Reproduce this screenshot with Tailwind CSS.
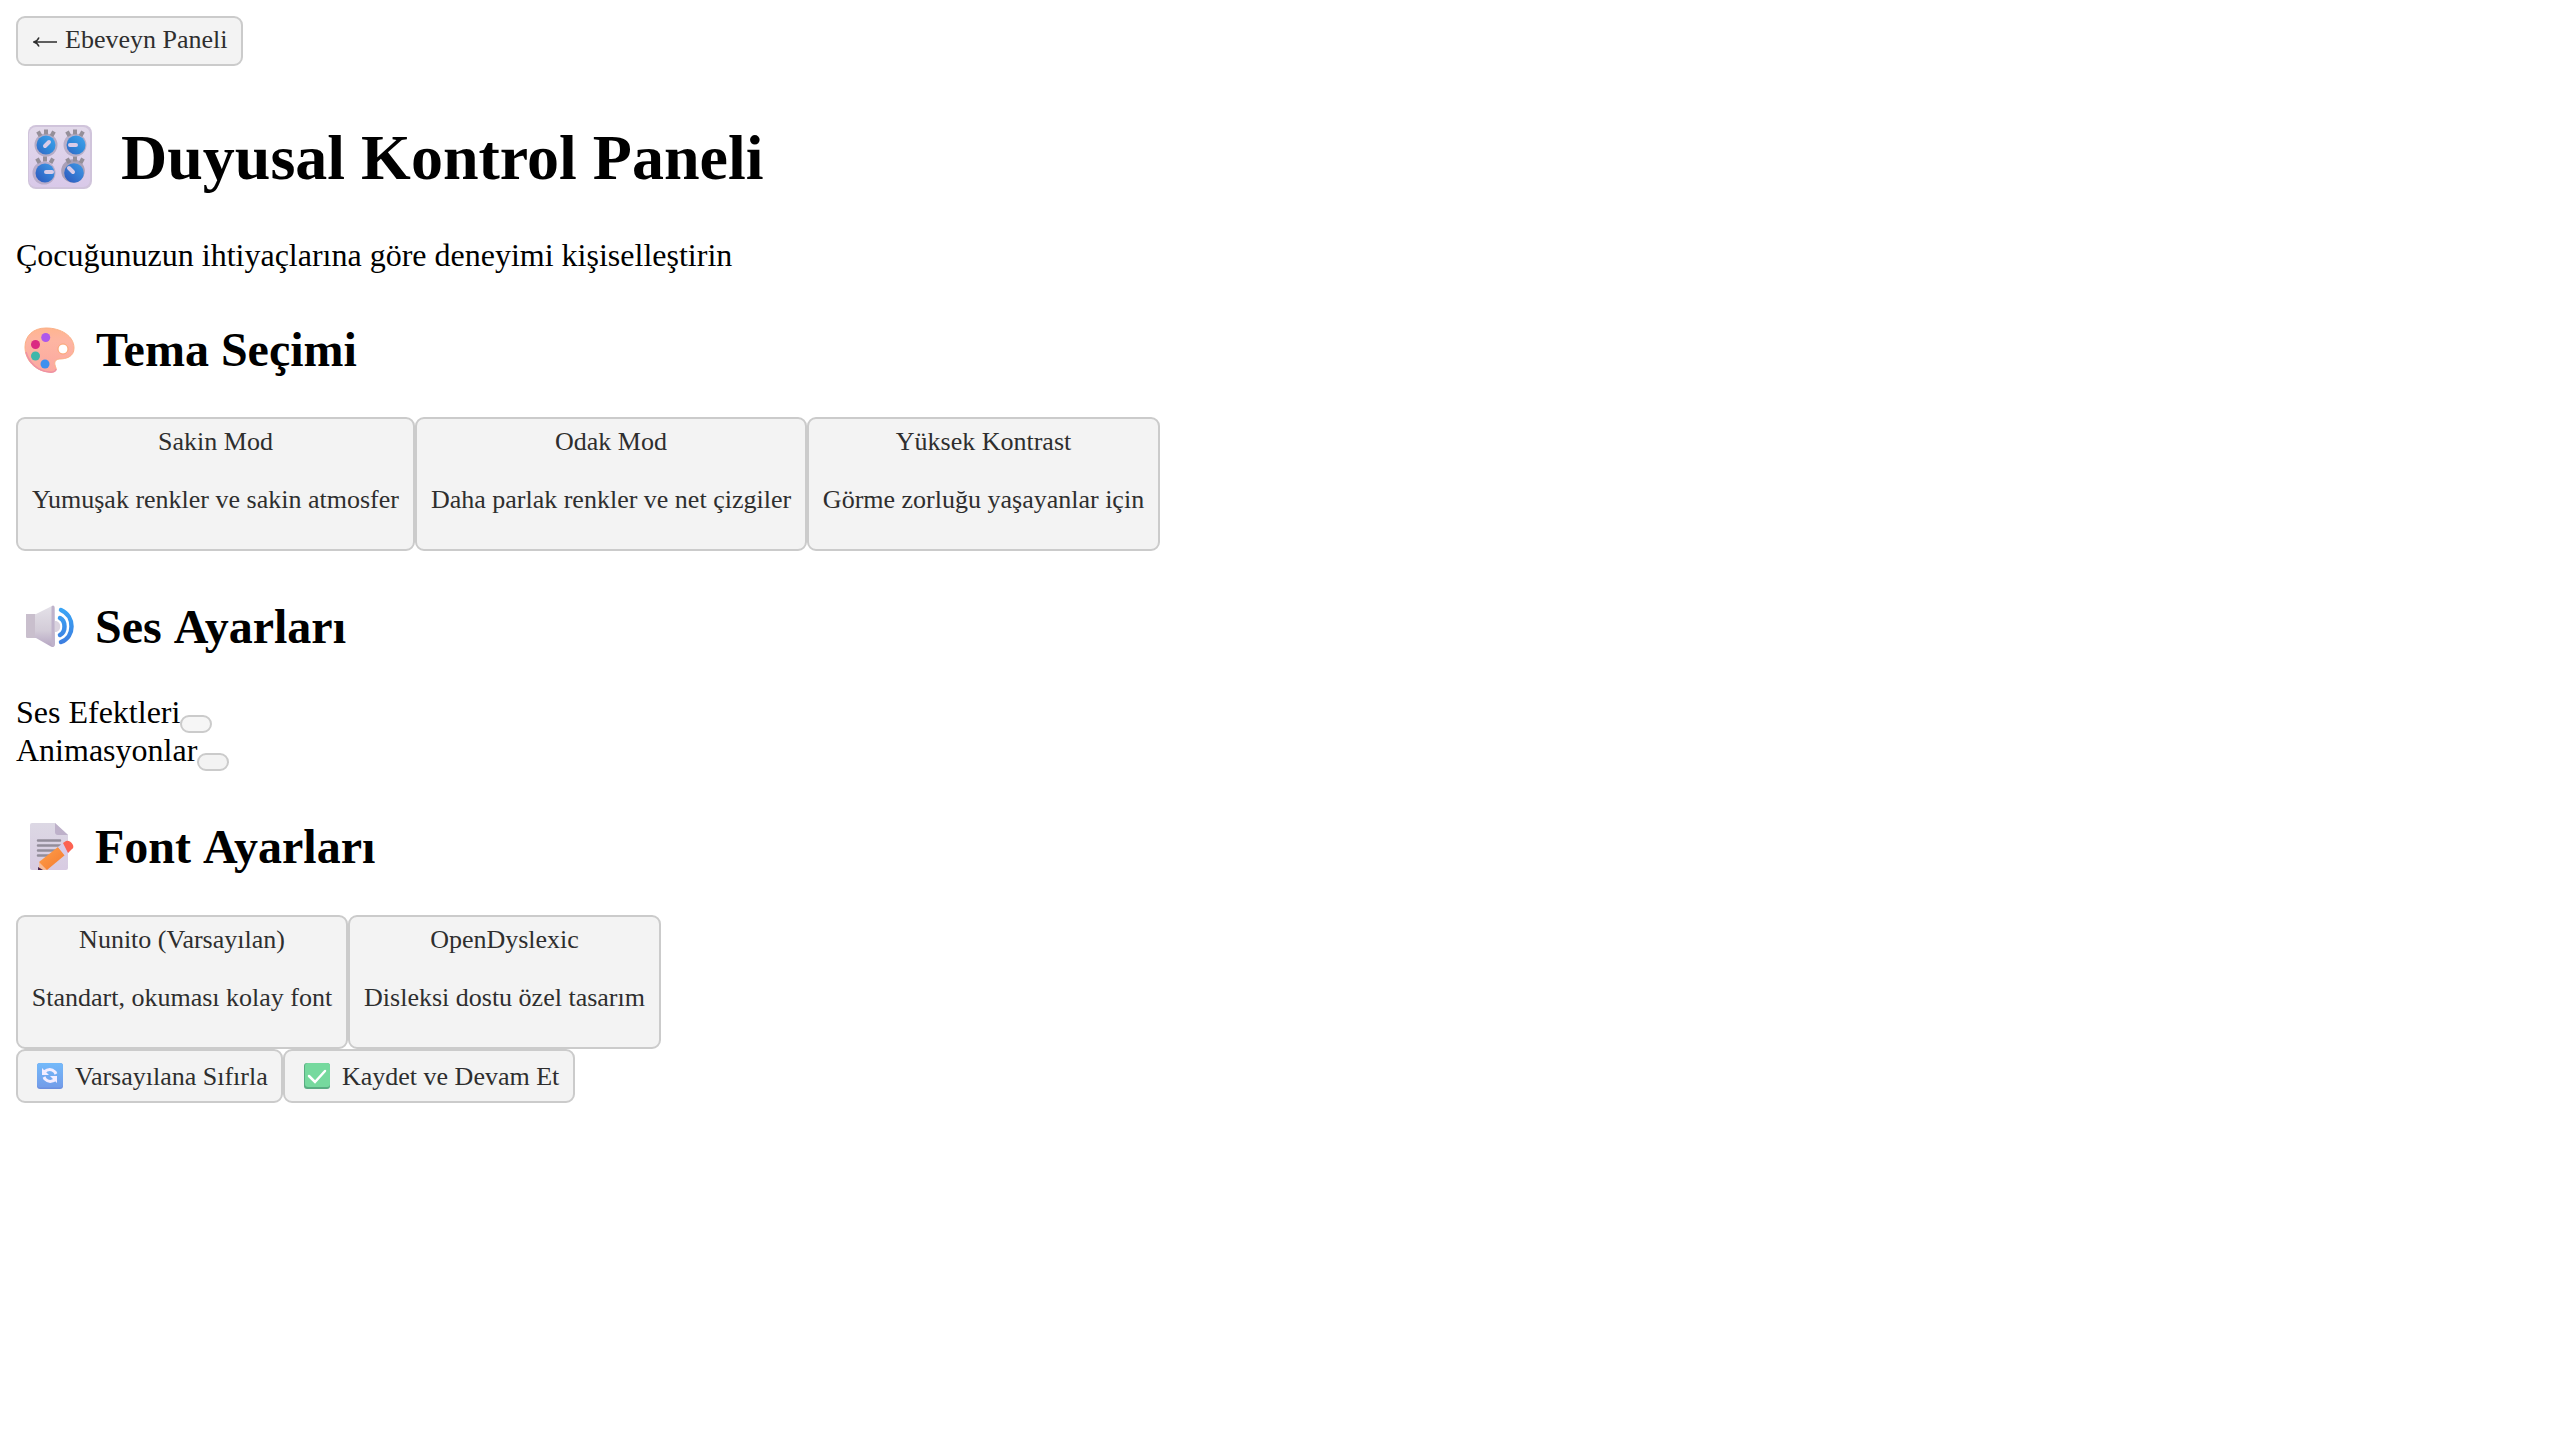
<!DOCTYPE html>
<html lang="tr">
<head>
<meta charset="utf-8">
<title>Duyusal Kontrol Paneli</title>
<script src="https://cdn.jsdelivr.net/npm/@tailwindcss/browser@4"></script>
</head>
<body class="bg-white px-4 pt-4 font-['Liberation_Serif','Times_New_Roman',serif] text-[32px] text-black">
<svg width="0" height="0" class="absolute">
  <defs>
    <linearGradient id="panel" x1="0" y1="0" x2="0" y2="1"><stop offset="0" stop-color="#e2d9ea"/><stop offset="1" stop-color="#d9c9e9"/></linearGradient>
    <linearGradient id="knob" x1="1" y1="0" x2="0" y2="1"><stop offset="0" stop-color="#42a5ee"/><stop offset=".55" stop-color="#2f87d8"/><stop offset="1" stop-color="#3463c4"/></linearGradient>
    <linearGradient id="knob2" x1="1" y1="0" x2="0" y2="1"><stop offset="0" stop-color="#3f9ce8"/><stop offset="1" stop-color="#2c55bb"/></linearGradient>
    <linearGradient id="pal" x1="0" y1="0" x2="0" y2="1"><stop offset="0" stop-color="#ffb58f"/><stop offset=".3" stop-color="#feb5a2"/><stop offset="1" stop-color="#fba8a0"/></linearGradient>
    <linearGradient id="horn" x1="0" y1="0" x2="0" y2="1"><stop offset="0" stop-color="#e4e1e8"/><stop offset=".6" stop-color="#d3ccd8"/><stop offset="1" stop-color="#b5a5c2"/></linearGradient>
    <linearGradient id="wave" gradientUnits="userSpaceOnUse" x1="0" y1="8" x2="0" y2="41"><stop offset="0" stop-color="#3aa4f5"/><stop offset="1" stop-color="#3c7ee0"/></linearGradient>
    <linearGradient id="paper" x1="0" y1="0" x2="0" y2="1"><stop offset="0" stop-color="#dcd8e4"/><stop offset="1" stop-color="#d8cbe2"/></linearGradient>
    <linearGradient id="pencil" x1="0" y1="0" x2="1" y2="1"><stop offset="0" stop-color="#ffa04a"/><stop offset="1" stop-color="#f47a30"/></linearGradient>
    <linearGradient id="blue" x1="0" y1="0" x2="0" y2="1"><stop offset="0" stop-color="#74bafa"/><stop offset="1" stop-color="#739ce9"/></linearGradient>
    <g id="ticks" fill="none" stroke="#958f99" stroke-width="4" stroke-linecap="butt"><path d="M-5.500-10l-2.500-4.500M0-11.500v-5M5.500-10l2.500-4.500"/></g>
  </defs>
</svg>
<main class="flex flex-col items-start">
  <button class="flex h-[50px] w-[227px] whitespace-nowrap rounded-[9px] border-2 border-[#cbcbcb] bg-[#f3f3f3] pt-[7px] pl-[15px] text-[26px] leading-[29px] text-[#2e2e2e]">
    <svg class="mt-[11px] mr-2 h-3 w-6" viewBox="0 0 24 12" fill="none" stroke="#2e2e2e" stroke-width="1.500"><path d="M1 6h23M6 1.500Q4.500 5 .8 6 4.500 7 6 10.500"/></svg><span>Ebeveyn Paneli</span>
  </button>

  <h1 class="mt-[56px] flex h-[72px] items-center whitespace-nowrap text-[64px] font-bold leading-[72px]">
    <svg class="mr-[28px] ml-[11px] -mt-[2px] h-[66px] w-[66px]" viewBox="0 0 66 66">
      <rect x="1" y="1" width="64" height="64" rx="8" fill="#d0c4db"/><rect x="2" y="3" width="61" height="60" rx="7" fill="url(#panel)"/>
      <circle cx="19" cy="21" r="11.5" fill="#b4abc5"/><circle cx="19" cy="21" r="9.5" fill="url(#knob)"/>
      <circle cx="48" cy="21" r="11.5" fill="#b9afc8"/><circle cx="49" cy="21" r="9.5" fill="url(#knob)"/>
      <circle cx="17" cy="49" r="11.5" fill="#b8acca"/><circle cx="18" cy="49" r="9.5" fill="url(#knob2)"/>
      <circle cx="46" cy="47" r="11.8" fill="#a9a0b8"/><circle cx="47" cy="49" r="9.8" fill="url(#knob2)"/>
      <use href="#ticks" x="19" y="22"/><use href="#ticks" x="48" y="22"/><use href="#ticks" x="18" y="49"/><use href="#ticks" x="48" y="49"/>
      <path d="M18 22l4-4M43 21h6M19 48h6M42 44l4 4" stroke="#d9cce8" stroke-width="4" stroke-linecap="round"/>
    </svg><span>Duyusal Kontrol Paneli</span>
  </h1>

  <p class="mt-[43px] h-9 whitespace-nowrap leading-9">Çocuğunuzun ihtiyaçlarına göre deneyimi kişiselleştirin</p>

  <h2 class="mt-[50px] flex h-[54px] items-center whitespace-nowrap text-[48px] font-bold leading-[54px]">
    <svg class="mr-5 ml-[8px] h-[50px] w-[52px]" viewBox="0 0 52 50">
      <path d="M22 3C9 3 1 11 1 22c0 13 10 24 24 25 5 .5 8-1 7-4-2-5-2-8 3-9 7 0 15-2 15-11C50 11 37 3 22 3Z" fill="url(#pal)" stroke="#fbb087" stroke-width="1"/>
      <path d="M2 27c3 11 12 19 23 20 4 .5 7-.5 7-3" fill="none" stroke="#ee91a5" stroke-width="1.5"/>
      <circle cx="39" cy="24" r="5" fill="#fff" stroke="#fba46f"/>
      <circle cx="21.700" cy="12.500" r="4.500" fill="#ae58eb"/><circle cx="11.500" cy="19.500" r="4.500" fill="#db2a82"/><circle cx="11.500" cy="31" r="4.500" fill="#3fb7aa"/><circle cx="21" cy="39" r="4.500" fill="#3e90ee"/>
    </svg><span>Tema Seçimi</span>
  </h2>

  <div class="mt-10 flex h-[134px] whitespace-nowrap text-[26px] leading-[29px] text-[#2e2e2e]">
    <button class="flex w-[399px] flex-col items-center rounded-[9px] border-2 border-[#cbcbcb] bg-[#f3f3f3] pt-2"><span>Sakin Mod</span><span class="mt-[29px]">Yumuşak renkler ve sakin atmosfer</span></button>
    <button class="flex w-[392px] flex-col items-center rounded-[9px] border-2 border-[#cbcbcb] bg-[#f3f3f3] pt-2"><span>Odak Mod</span><span class="mt-[29px]">Daha parlak renkler ve net çizgiler</span></button>
    <button class="flex w-[353px] flex-col items-center rounded-[9px] border-2 border-[#cbcbcb] bg-[#f3f3f3] pt-2"><span>Yüksek Kontrast</span><span class="mt-[29px]">Görme zorluğu yaşayanlar için</span></button>
  </div>

  <h2 class="mt-[49px] flex h-[54px] items-center whitespace-nowrap text-[48px] font-bold leading-[54px] [word-spacing:2.6px]">
    <svg class="mr-[19px] ml-[8px] h-[50px] w-[52px]" viewBox="0 0 52 50">
      <path d="M2 12h10L26 5c3-2 5-1 5 3v33c0 4-2 5-5 3L12 36H4c-2 0-2-1-2-3Z" fill="url(#horn)"/>
      <path d="M2 12h9v24H4c-2 0-2-1-2-3Z" fill="#c9bfcd"/><path d="M29 5v38" stroke="#bfb3cb" stroke-width="3" stroke-linecap="round"/>
      <path d="M31 19c7 0 7 11 0 11Z" fill="#dad3df"/>
      <path d="M36 16c6 3 6 14 0 17M37 8c14 6 14 27 0 32" fill="none" stroke="url(#wave)" stroke-width="4.500" stroke-linecap="round"/>
    </svg><span>Ses Ayarları</span>
  </h2>

  <div class="mt-[39px] flex h-[38px] whitespace-nowrap leading-[38px]"><span>Ses Efektleri</span><button aria-label="Ses Efektleri" class="mt-[22px] h-[18px] w-8 rounded-full border-2 border-[#cbcbcb] bg-[#f6f6f6]"></button></div>
  <div class="flex h-[38px] whitespace-nowrap leading-[38px]"><span>Animasyonlar</span><button aria-label="Animasyonlar" class="mt-[22px] h-[18px] w-8 rounded-full border-2 border-[#cbcbcb] bg-[#f3f3f3]"></button></div>

  <h2 class="mt-[51px] flex h-[54px] items-center whitespace-nowrap text-[48px] font-bold leading-[54px] [word-spacing:2.6px]">
    <svg class="mr-[19px] ml-[8px] h-[50px] w-[52px]" viewBox="0 0 52 50">
      <path d="M8 1h23l13 12v33q0 2-2 2H8q-2 0-2-2V3q0-2 2-2Z" fill="url(#paper)"/>
      <path d="M31 1l13 12H34q-3 0-3-3Z" fill="#beb1ca"/>
      <path d="M14 18.500h22M14 23.500h22M14 28.500h20M14 33.500h13" stroke="#938d9b" stroke-width="2.500" stroke-linecap="round"/>
      <path d="M15 40L34 25l7 8-18 15h-6Z" fill="url(#pencil)"/><path d="M15 40l8 8h-8Z" fill="#f5bc9b"/><path d="M14 45l5 3h-5Z" fill="#4d2850"/>
      <path d="M34 25l5-4 6 9-4 4Z" fill="#d9cce8"/><path d="M39 21l3-2q4-1 7 4 1 3-1 4l-4 4Z" fill="#fc6252"/>
    </svg><span>Font Ayarları</span>
  </h2>

  <div class="mt-[41px] flex h-[134px] whitespace-nowrap text-[26px] leading-[29px] text-[#2e2e2e]">
    <button class="flex w-[332px] flex-col items-center rounded-[9px] border-2 border-[#cbcbcb] bg-[#f3f3f3] pt-2"><span>Nunito (Varsayılan)</span><span class="mt-[29px]">Standart, okuması kolay font</span></button>
    <button class="flex w-[313px] flex-col items-center rounded-[9px] border-2 border-[#cbcbcb] bg-[#f3f3f3] pt-2"><span>OpenDyslexic</span><span class="mt-[29px]">Disleksi dostu özel tasarım</span></button>
  </div>
  <div class="flex h-[54px] whitespace-nowrap text-[26px] leading-[29px] text-[#2e2e2e]">
    <button class="flex w-[267px] rounded-[9px] border-2 border-[#cbcbcb] bg-[#f3f3f3] pt-[11px] pl-[19px]">
      <svg class="mt-[1px] mr-3 h-[26px] w-[26px]" viewBox="0 0 26 26"><rect width="26" height="26" rx="3" fill="#6c8fdf"/><rect width="26" height="24.500" rx="3" fill="url(#blue)"/><path d="M7 9q6-5 11 0l1 2M19 16q-6 5-11 0l-1-2" fill="none" stroke="#f4edff" stroke-width="3"/><path d="M5 5v7h7ZM20 20v-7h-7Z" fill="#f4edff"/></svg><span>Varsayılana Sıfırla</span>
    </button>
    <button class="flex w-[292px] rounded-[9px] border-2 border-[#cbcbcb] bg-[#f3f3f3] pt-[11px] pl-[19px]">
      <svg class="mt-[1px] mr-3 h-[26px] w-[26px]" viewBox="0 0 26 26"><rect width="26" height="26" rx="3" fill="#59ad82"/><rect x="1" width="25" height="24" rx="3" fill="#76d99e"/><path d="M5 13l6 6L21 8" fill="none" stroke="#fff" stroke-width="2.500" stroke-linecap="round"/></svg><span>Kaydet ve Devam Et</span>
    </button>
  </div>
</main>
</body>
</html>
